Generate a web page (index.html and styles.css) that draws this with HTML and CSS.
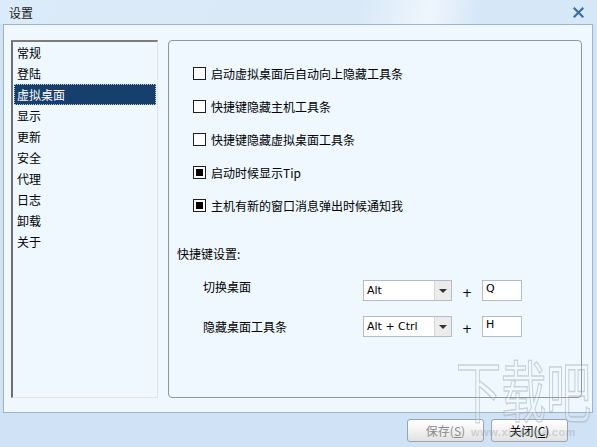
FILE: index.html
```html
<!DOCTYPE html>
<html lang="zh-CN">
<head>
    <meta charset="UTF-8">
    <title>设置</title>
    <link rel="stylesheet" href="styles.css">
</head>
<body>
    <div class="window">
        <div class="titlebar">
            <span class="title">设置</span>
            <svg class="close" width="11" height="11" viewBox="0 0 11 11">
                <path d="M1.5 1.5 L9.5 9.5 M9.5 1.5 L1.5 9.5" stroke="#3b6d9e" stroke-width="2.2" stroke-linecap="square"/>
            </svg>
        </div>
        <div class="main">
            <ul class="nav">
                <li>常规</li>
                <li>登陆</li>
                <li class="active"><span>虚拟桌面</span></li>
                <li>显示</li>
                <li>更新</li>
                <li>安全</li>
                <li>代理</li>
                <li>日志</li>
                <li>卸载</li>
                <li>关于</li>
            </ul>
            <div class="group">
                <div class="options">
                    <label class="option"><span class="check"></span>启动虚拟桌面后自动向上隐藏工具条</label>
                    <label class="option"><span class="check"></span>快捷键隐藏主机工具条</label>
                    <label class="option"><span class="check"></span>快捷键隐藏虚拟桌面工具条</label>
                    <label class="option"><span class="check checked"></span>启动时候显示Tip</label>
                    <label class="option"><span class="check checked"></span>主机有新的窗口消息弹出时候通知我</label>
                </div>
                <div class="section-title">快捷键设置:</div>
                <div class="hotkeys">
                    <div class="hotkey">
                        <span class="hotkey-label up">切换桌面</span>
                        <div class="combo">
                            <span class="combo-text">Alt</span>
                            <span class="combo-btn"><i></i></span>
                        </div>
                        <span class="plus">+</span>
                        <div class="keybox">Q</div>
                    </div>
                    <div class="hotkey">
                        <span class="hotkey-label">隐藏桌面工具条</span>
                        <div class="combo">
                            <span class="combo-text">Alt + Ctrl</span>
                            <span class="combo-btn"><i></i></span>
                        </div>
                        <span class="plus">+</span>
                        <div class="keybox">H</div>
                    </div>
                </div>
            </div>
        </div>
        <div class="footer">
            <button class="btn disabled">保存(<u>S</u>)</button>
            <button class="btn">关闭(<u>C</u>)</button>
        </div>
        <div class="watermark">
            <span class="wm-big">下载吧</span>
            <span class="wm-small">www.xiazaiba.com</span>
        </div>
    </div>
</body>
</html>
```

FILE: styles.css
```css
body {
    margin: 0;
    font-family: "Noto Sans CJK SC", "Liberation Sans", sans-serif;
    font-size: 12px;
    color: #000;
}
.window {
    position: relative;
    width: 597px;
    height: 447px;
    background-color: #cfe2f6;
    overflow: hidden;
}
.titlebar {
    height: 24px;
    display: flex;
    align-items: center;
    justify-content: space-between;
    padding: 0 13px 0 9px;
    background: linear-gradient(100deg, #dcebf9 0%, #d9e9f8 60%, #eef6fd 72%, #d6e7f7 80%, #d6e7f7 100%);
    box-sizing: border-box;
}
.title {
    font-size: 12px;
    color: #1a1a1a;
}
.close {
    margin-top: 1px;
}
.main {
    display: flex;
    gap: 10px;
    height: 389px;
    margin: 0 4px 0 3px;
    padding: 15px 10px 14px 7px;
    box-sizing: border-box;
    background-color: #eef8fe;
    border: 1px solid #9fb3c6;
}
.nav {
    list-style: none;
    margin: 0;
    padding: 0;
    width: 147px;
    box-sizing: border-box;
    border-style: solid;
    border-width: 2px 1px 1px 2px;
    border-color: #7d7d7d #e4e4e4 #e4e4e4 #6f6f6f;
}
.nav li {
    height: 21px;
    line-height: 21px;
    padding-left: 3px;
    margin: 0 1px;
}
.nav li.active {
    background-color: #173f6c;
    color: #fff;
    outline: 1px dotted #b9c8d8;
    outline-offset: -1px;
}
.group {
    flex: 1;
    border: 1px solid #8e969d;
    border-radius: 4px;
}
.options {
    padding: 16px 0 0 24px;
}
.option {
    display: flex;
    align-items: center;
    gap: 5px;
    height: 33px;
}
.check {
    position: relative;
    width: 13px;
    height: 13px;
    box-sizing: border-box;
    border: 1px solid #1e1e1e;
    background-color: #fff;
}
.check.checked::after {
    content: "";
    position: absolute;
    left: 2px;
    top: 2px;
    width: 7px;
    height: 7px;
    background-color: #000;
}
.section-title {
    margin-top: 24px;
    padding-left: 8px;
    line-height: 16px;
}
.hotkeys {
    display: flex;
    flex-direction: column;
    gap: 15px;
    margin-top: 18px;
    padding-left: 34px;
}
.hotkey {
    display: flex;
    align-items: center;
    height: 21px;
}
.hotkey-label {
    width: 160px;
}
.hotkey-label.up {
    margin-top: -8px;
}
.combo {
    display: flex;
    width: 89px;
    height: 21px;
    box-sizing: border-box;
    border: 1px solid #b4bcc4;
    background-color: #fff;
}
.combo-text {
    flex: 1;
    padding-left: 3px;
    line-height: 19px;
    font-family: "DejaVu Sans", sans-serif;
    font-size: 11px;
}
.combo-btn {
    width: 16px;
    background-color: #ececec;
    border-left: 1px solid #d6d6d6;
    display: flex;
    align-items: center;
    justify-content: center;
}
.combo-btn i {
    width: 0;
    height: 0;
    border-left: 4px solid transparent;
    border-right: 4px solid transparent;
    border-top: 4px solid #333;
    margin-top: 1px;
}
.plus {
    width: 30px;
    text-align: center;
    font-family: "DejaVu Sans", sans-serif;
    font-size: 12px;
    padding-top: 4px;
}
.keybox {
    width: 40px;
    height: 21px;
    box-sizing: border-box;
    border: 1px solid #b4bcc4;
    background-color: #fff;
    padding: 1px 0 0 3px;
    font-family: "DejaVu Sans", sans-serif;
    font-size: 11px;
    line-height: 14px;
}
.footer {
    height: 34px;
    display: flex;
    justify-content: flex-end;
    align-items: center;
    gap: 7px;
    padding-right: 29px;
}
.btn {
    width: 77px;
    height: 23px;
    margin-top: 1px;
    border: 1px solid #98a4b0;
    border-radius: 3px;
    background: linear-gradient(#ffffff, #f2f2f2 50%, #e2e2e2);
    font-family: "Noto Sans CJK SC", sans-serif;
    font-size: 12px;
    color: #000;
    padding: 0;
}
.btn.disabled {
    color: #8a8a8a;
}
.watermark {
    position: absolute;
    right: 6px;
    bottom: 9px;
    display: flex;
    flex-direction: column;
    align-items: center;
    pointer-events: none;
}
.wm-big {
    font-size: 45px;
    line-height: 50px;
    color: rgba(255, 255, 255, 0.2);
    -webkit-text-stroke: 1px rgba(140, 150, 160, 0.4);
    transform: scaleY(1.5);
    transform-origin: bottom;
}
.wm-small {
    font-family: "Liberation Sans", sans-serif;
    font-size: 11px;
    font-weight: bold;
    line-height: 12px;
    color: rgba(150, 160, 170, 0.4);
    letter-spacing: 0.5px;
}
```
